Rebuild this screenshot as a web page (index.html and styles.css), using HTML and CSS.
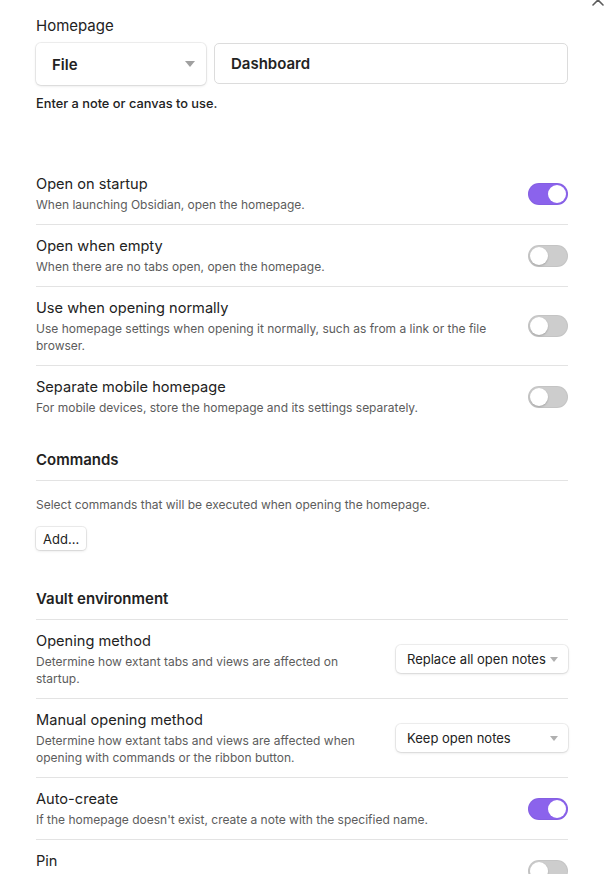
FILE: index.html
```html
<!DOCTYPE html>
<html lang="en">
<head>
<meta charset="utf-8">
<title>Homepage settings</title>
<link rel="stylesheet" href="styles.css">
</head>
<body>
<div class="modal">
  <svg class="close" width="14" height="14" viewBox="0 0 14 14" aria-hidden="true"><path d="M2 2 L12 12 M12 2 L2 12" stroke="#5c5c5c" stroke-width="1.6" stroke-linecap="round" fill="none"/></svg>
  <div class="content">
    <div class="homepage">
      <div class="label">Homepage</div>
      <div class="picker">
        <div class="select big">
          <span>File</span>
          <span class="caret"></span>
        </div>
        <div class="input">Dashboard</div>
      </div>
      <div class="hint">Enter a note or canvas to use.</div>
    </div>

    <div class="item first">
      <div class="info">
        <div class="name">Open on startup</div>
        <div class="desc">When launching Obsidian, open the homepage.</div>
      </div>
      <div class="control"><span class="toggle on"></span></div>
    </div>
    <div class="item">
      <div class="info">
        <div class="name">Open when empty</div>
        <div class="desc">When there are no tabs open, open the homepage.</div>
      </div>
      <div class="control"><span class="toggle"></span></div>
    </div>
    <div class="item">
      <div class="info">
        <div class="name">Use when opening normally</div>
        <div class="desc">Use homepage settings when opening it normally, such as from a link or the file browser.</div>
      </div>
      <div class="control"><span class="toggle"></span></div>
    </div>
    <div class="item">
      <div class="info">
        <div class="name">Separate mobile homepage</div>
        <div class="desc">For mobile devices, store the homepage and its settings separately.</div>
      </div>
      <div class="control"><span class="toggle"></span></div>
    </div>

    <div class="heading">Commands</div>
    <div class="section-desc">Select commands that will be executed when opening the homepage.</div>
    <button class="btn">Add...</button>

    <div class="heading vault">Vault environment</div>
    <div class="item first">
      <div class="info">
        <div class="name">Opening method</div>
        <div class="desc">Determine how extant tabs and views are affected on startup.</div>
      </div>
      <div class="control">
        <div class="select small"><span>Replace all open notes</span><span class="caret"></span></div>
      </div>
    </div>
    <div class="item">
      <div class="info">
        <div class="name">Manual opening method</div>
        <div class="desc">Determine how extant tabs and views are affected when opening with commands or the ribbon button.</div>
      </div>
      <div class="control">
        <div class="select small"><span>Keep open notes</span><span class="caret"></span></div>
      </div>
    </div>
    <div class="item">
      <div class="info">
        <div class="name">Auto-create</div>
        <div class="desc">If the homepage doesn't exist, create a note with the specified name.</div>
      </div>
      <div class="control"><span class="toggle on"></span></div>
    </div>
    <div class="item">
      <div class="info">
        <div class="name">Pin</div>
        <div class="desc placeholder"></div>
      </div>
      <div class="control"><span class="toggle"></span></div>
    </div>
  </div>
</div>
</body>
</html>
```

FILE: styles.css
```css
html, body {
  margin: 0;
  padding: 0;
  background: #ffffff;
}

body {
  font-family: Inter, "Noto Sans", sans-serif;
  color: #222222;
  overflow: hidden;
  height: 874px;
}

.modal {
  position: relative;
  width: 611px;
  height: 874px;
  overflow: hidden;
}

.close {
  position: absolute;
  top: -7px;
  right: 6px;
}

.content {
  width: 532px;
  padding: 16px 0 0 36px;
}

.label {
  font-size: 15px;
  line-height: 20px;
}

.picker {
  display: flex;
  gap: 8px;
  margin-top: 7px;
}

.select {
  display: flex;
  align-items: center;
  justify-content: space-between;
  background: #ffffff;
  border-radius: 5px;
  box-shadow: 0 0 0 1px rgba(0,0,0,0.06), 0 1px 3px rgba(0,0,0,0.12);
  box-sizing: border-box;
}

.select.big {
  width: 170px;
  height: 42px;
  padding: 0 11px 0 16px;
  font-size: 15px;
  font-weight: 600;
}

.caret {
  width: 0;
  height: 0;
  border-left: 5px solid transparent;
  border-right: 5px solid transparent;
  border-top: 6px solid #a0a0a0;
}

.select.small .caret {
  border-left-width: 4px;
  border-right-width: 4px;
  border-top-width: 5px;
  border-top-color: #b0b0b0;
}

.input {
  flex: 1;
  height: 41px;
  box-sizing: border-box;
  border: 1px solid #dcdcdc;
  border-radius: 5px;
  padding: 0 16px;
  display: flex;
  align-items: center;
  font-size: 15px;
  font-weight: 600;
}

.hint {
  margin-top: 10px;
  font-size: 12.8px;
  font-weight: 500;
  line-height: 17px;
}

.item {
  display: flex;
  align-items: center;
  padding: 11px 0;
  border-top: 1px solid #e3e3e3;
}

.item.first {
  border-top: none;
}

.homepage + .item {
  margin-top: 51px;
}

.info {
  flex: 1;
  margin-right: 16px;
}

.name {
  font-size: 14.6px;
  line-height: 20px;
}

.desc {
  margin-top: 2px;
  font-size: 12px;
  line-height: 17px;
  color: #5c5c5c;
}

.desc.placeholder {
  height: 17px;
}

.control {
  display: flex;
  justify-content: flex-end;
}

.toggle {
  position: relative;
  display: block;
  width: 40px;
  height: 22px;
  border-radius: 11px;
  background: #cdcdcd;
  box-shadow: inset 0 0 0 1px rgba(0,0,0,0.04);
}

.toggle::after {
  content: "";
  position: absolute;
  top: 2px;
  left: 2px;
  width: 18px;
  height: 18px;
  border-radius: 50%;
  background: #ffffff;
  box-shadow: 0 1px 2px rgba(0,0,0,0.2);
}

.toggle.on {
  background: #8b63ec;
}

.toggle.on::after {
  left: 20px;
  box-shadow: none;
}

.heading {
  font-size: 15px;
  font-weight: 600;
  line-height: 20px;
  padding: 23px 0 10px;
  border-bottom: 1px solid #e3e3e3;
}

.heading.vault {
  padding-top: 39px;
  padding-bottom: 10px;
}

.section-desc {
  margin-top: 15px;
  font-size: 12px;
  line-height: 17px;
  color: #5c5c5c;
}

.btn {
  display: block;
  margin-top: 14px;
  height: 23px;
  padding: 0 7px;
  font-family: inherit;
  font-size: 13px;
  color: #222222;
  background: #ffffff;
  border: none;
  border-radius: 4px;
  box-shadow: 0 0 0 1px rgba(0,0,0,0.07), 0 1px 3px rgba(0,0,0,0.12);
}

.select.small {
  width: 172px;
  height: 28px;
  padding: 0 10px 0 11px;
  font-size: 13px;
}
```
